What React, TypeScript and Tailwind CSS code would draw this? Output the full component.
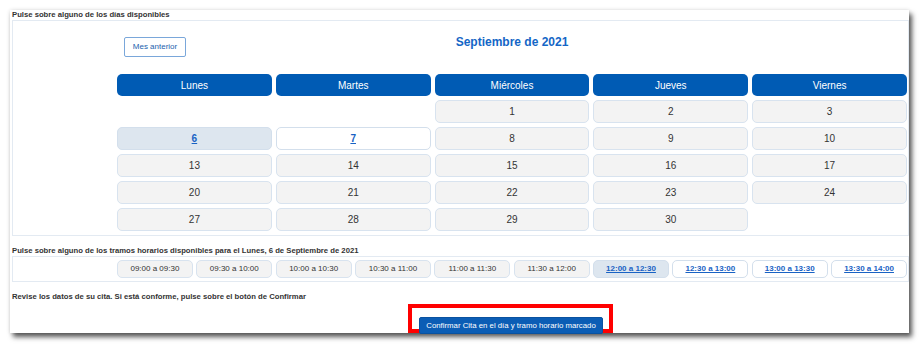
import React from "react";

const weekdays = ["Lunes", "Martes", "Miércoles", "Jueves", "Viernes"];

// null = empty slot in the grid
const days: (number | null)[] = [
  null, null, 1, 2, 3,
  6, 7, 8, 9, 10,
  13, 14, 15, 16, 17,
  20, 21, 22, 23, 24,
  27, 28, 29, 30, null,
];

const slots = [
  "09:00 a 09:30",
  "09:30 a 10:00",
  "10:00 a 10:30",
  "10:30 a 11:00",
  "11:00 a 11:30",
  "11:30 a 12:00",
  "12:00 a 12:30",
  "12:30 a 13:00",
  "13:00 a 13:30",
  "13:30 a 14:00",
];

const DayCell = ({ day }: { day: number | null }) => {
  if (day === null) return <div className="h-[23px]" />;
  if (day === 6)
    return (
      <div className="h-[23px] rounded-[5px] border border-[#d3dfec] bg-[#dde6ef] flex items-center justify-center text-[10px] font-bold underline text-[#1862c4]">
        {day}
      </div>
    );
  if (day === 7)
    return (
      <div className="h-[23px] rounded-[5px] border border-[#d3dfec] bg-white flex items-center justify-center text-[10px] font-bold underline text-[#1862c4]">
        {day}
      </div>
    );
  return (
    <div className="h-[23px] rounded-[5px] border border-[#d8e3ef] bg-[#f3f3f3] flex items-center justify-center text-[10px] text-[#333]">
      {day}
    </div>
  );
};

const SlotCell = ({ label, index }: { label: string; index: number }) => {
  if (index === 6)
    return (
      <div className="h-[18px] rounded-[5px] border border-[#d3dfec] bg-[#dde6ef] flex items-center justify-center text-[8px] font-bold underline text-[#1862c4]">
        {label}
      </div>
    );
  if (index > 6)
    return (
      <div className="h-[18px] rounded-[5px] border border-[#d3dfec] bg-white flex items-center justify-center text-[8px] font-bold underline text-[#1862c4]">
        {label}
      </div>
    );
  return (
    <div className="h-[18px] rounded-[5px] border border-[#d8e3ef] bg-[#f3f3f3] flex items-center justify-center text-[8px] text-[#333]">
      {label}
    </div>
  );
};

export default function App() {
  return (
    <div
      className="w-[921px] h-[344px] bg-white pt-[10px] pl-[10px]"
      style={{ fontFamily: '"Liberation Sans", Arial, sans-serif' }}
    >
      <div className="w-[899px] h-[323px] bg-white pl-[2px] flex flex-col shadow-[3px_4px_5px_rgba(0,0,0,0.65),0_0_4px_rgba(0,0,0,0.12)]">
        <p className="text-[7.7px] leading-[10px] font-bold text-[#333]">
          Pulse sobre alguno de los días disponibles
        </p>

        <div className="border border-[#e3eaf2] pl-[104px] pr-[1px] pb-[4px]">
          <div className="grid grid-cols-[1fr_auto_1fr] items-start">
            <button className="justify-self-start ml-[7px] mt-[16px] w-[62px] h-[20px] rounded-[2px] border border-[#7aa7da] bg-white text-[8px] text-[#1d5fae]">
              Mes anterior
            </button>
            <h2 className="mt-[14px] text-[12px] leading-[14px] font-bold text-[#1466c6]">
              Septiembre de 2021
            </h2>
            <div />
          </div>

          <div className="grid grid-cols-5 gap-x-[4px] gap-y-[4px] mt-[17px]">
            {weekdays.map((d) => (
              <div
                key={d}
                className="h-[22px] rounded-[5px] bg-[#005bb4] flex items-center justify-center text-[10px] text-white"
              >
                {d}
              </div>
            ))}
            {days.map((d, i) => (
              <DayCell key={i} day={d} />
            ))}
          </div>
        </div>

        <p className="mt-[10px] text-[7.7px] leading-[10px] font-bold text-[#333]">
          Pulse sobre alguno de los tramos horarios disponibles para el Lunes, 6 de Septiembre de 2021
        </p>
        <div className="border border-[#e3eaf2] pl-[104px] pr-[1px] py-[3px]">
          <div className="grid grid-cols-10 gap-x-[3.5px]">
            {slots.map((s, i) => (
              <SlotCell key={s} label={s} index={i} />
            ))}
          </div>
        </div>

        <p className="mt-[10px] text-[7.7px] leading-[10px] font-bold text-[#333]">
          Revise los datos de su cita. Si está conforme, pulse sobre el botón de Confirmar
        </p>
        <div className="pl-[100px] flex justify-center mt-[2px]">
          <div className="w-[205px] h-[29px] border-[4px] border-[#ff0000] pl-[7px] pt-[3px]">
            <button className="w-[184px] h-[17px] rounded-[2px] bg-[#0b5db5] border border-[#0a52a0] text-[7.8px] text-white">
              Confirmar Cita en el día y tramo horario marcado
            </button>
          </div>
        </div>
      </div>
    </div>
  );
}
